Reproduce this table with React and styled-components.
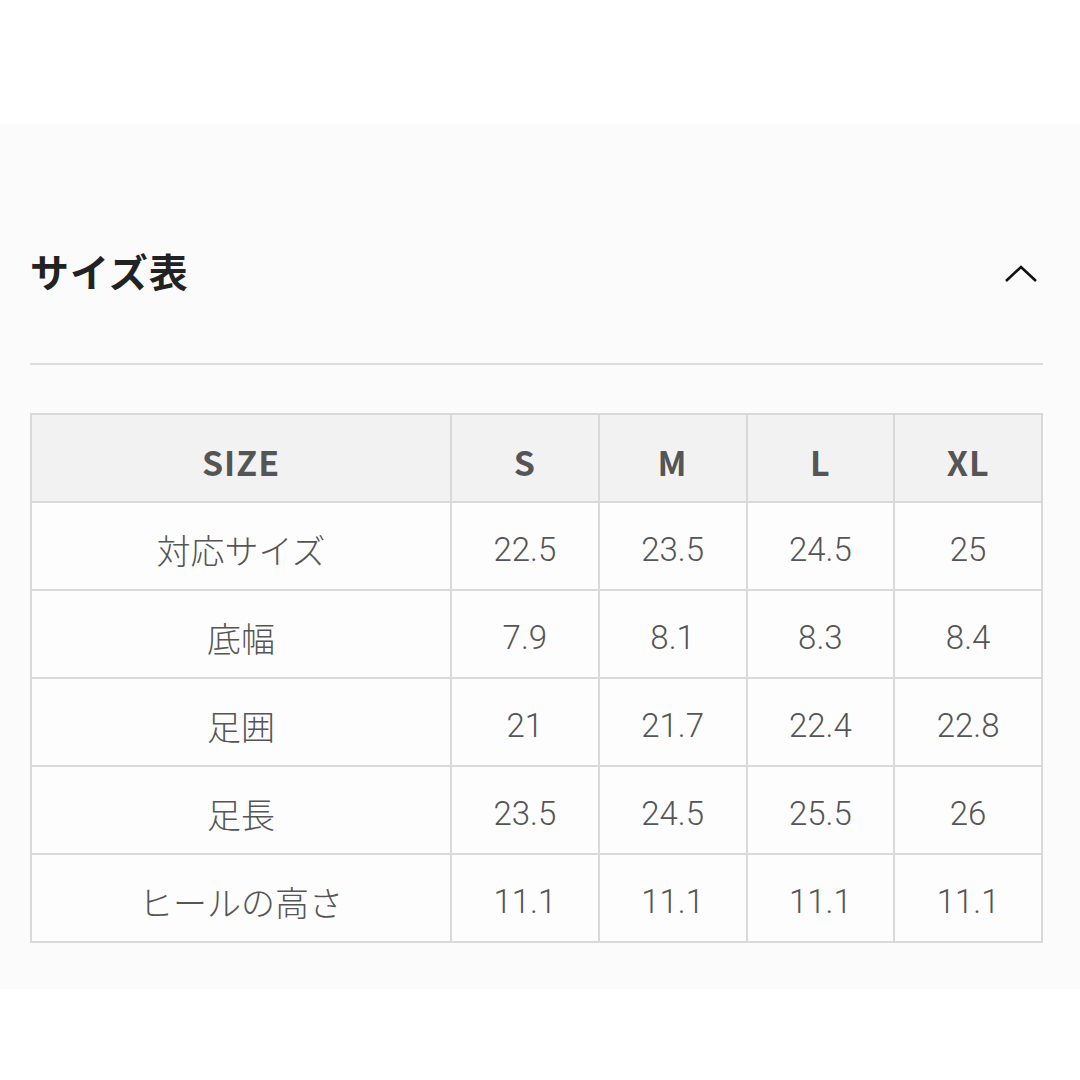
import React from 'react';
import styled, { createGlobalStyle } from 'styled-components';

const GlobalStyle = createGlobalStyle`
  html, body {
    margin: 0;
    padding: 0;
    background: #ffffff;
  }
  body {
    font-family: "Noto Sans CJK JP", "Noto Sans", sans-serif;
  }
`;

const Page = styled.div`
  width: 1080px;
  height: 1080px;
  padding-top: 124px;
  box-sizing: border-box;
  background: #ffffff;
`;

const Panel = styled.section`
  background: #fbfbfc;
  padding: 0 37px 46px 30px;
`;

const Header = styled.div`
  display: flex;
  align-items: center;
  justify-content: space-between;
  padding: 127px 0 73px;
  border-bottom: 2px solid #dcdcdc;
`;

const Title = styled.h2`
  margin: 0;
  font-size: 39px;
  font-weight: 700;
  color: #222;
  letter-spacing: 1px;
  line-height: 1;
`;

const Toggle = styled.button`
  border: 0;
  background: none;
  padding: 0;
  margin: 6px 5px 0 0;
  display: flex;
  cursor: pointer;
`;

const Table = styled.table`
  margin-top: 48px;
  width: 100%;
  border-collapse: collapse;
  table-layout: fixed;
  border: 2px solid #d9d9d9;
`;

const Cell = styled.td`
  height: 88px;
  padding: 6px 0 0;
  box-sizing: border-box;
  border: 2px solid #d9d9d9;
  text-align: center;
  color: #555;
  font-size: ${p => (p.$head ? '34px' : p.$num ? '33px' : '34px')};
  font-weight: ${p => (p.$head ? 700 : 300)};
  background: ${p => (p.$head ? '#f2f2f3' : '#fdfdfd')};
  font-family: ${p => (p.$num ? '"Roboto", "Noto Sans CJK JP", sans-serif' : '"Noto Sans CJK JP", sans-serif')};
  letter-spacing: ${p => (p.$head ? '1px' : '0')};
`;

const sizes = ['S', 'M', 'L', 'XL'];

const rows = [
  ['対応サイズ', '22.5', '23.5', '24.5', '25'],
  ['底幅', '7.9', '8.1', '8.3', '8.4'],
  ['足囲', '21', '21.7', '22.4', '22.8'],
  ['足長', '23.5', '24.5', '25.5', '26'],
  ['ヒールの高さ', '11.1', '11.1', '11.1', '11.1'],
];

const Chevron = () => (
  <svg width="34" height="20" viewBox="0 0 34 20" fill="none">
    <path d="M2 17 L17 3 L32 17" stroke="#111" strokeWidth="2.6" />
  </svg>
);

const App = () => (
  <>
    <GlobalStyle />
    <Page>
      <Panel>
        <Header>
          <Title>サイズ表</Title>
          <Toggle aria-label="閉じる">
            <Chevron />
          </Toggle>
        </Header>
        <Table>
          <colgroup>
            <col style={{ width: '420px' }} />
            <col />
            <col />
            <col />
            <col />
          </colgroup>
          <thead>
            <tr>
              <Cell as="th" $head>SIZE</Cell>
              {sizes.map(s => (
                <Cell as="th" $head key={s}>{s}</Cell>
              ))}
            </tr>
          </thead>
          <tbody>
            {rows.map(([label, ...vals]) => (
              <tr key={label}>
                <Cell>{label}</Cell>
                {vals.map((v, i) => (
                  <Cell $num key={i}>{v}</Cell>
                ))}
              </tr>
            ))}
          </tbody>
        </Table>
      </Panel>
    </Page>
  </>
);

export default App;
